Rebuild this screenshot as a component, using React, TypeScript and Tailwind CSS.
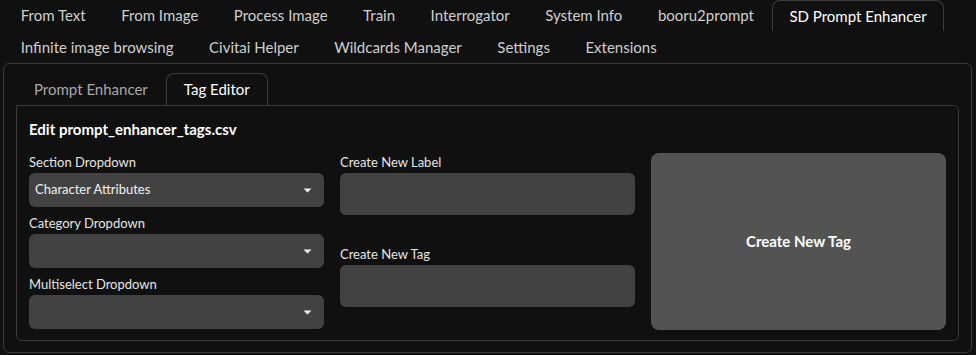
import React from "react";

const topRow1 = ["From Text", "From Image", "Process Image", "Train", "Interrogator", "System Info", "booru2prompt", "SD Prompt Enhancer"];
const topRow2 = ["Infinite image browsing", "Civitai Helper", "Wildcards Manager", "Settings", "Extensions"];

function Tab({ label, active }: { label: string; active?: boolean }) {
  return (
    <div
      className={
        "h-[31px] px-[16.75px] flex items-center text-[15px] whitespace-nowrap " +
        (active
          ? "border border-b-0 border-[#3c3c3c] rounded-t-lg text-white"
          : "border border-transparent text-[#cfcfcf]")
      }
    >
      {label}
    </div>
  );
}

function Caret() {
  return (
    <svg width="9" height="5" viewBox="0 0 9 5" className="shrink-0">
      <path d="M0.5 0.5h8L4.5 4.5z" fill="#f0f0f0" />
    </svg>
  );
}

function Dropdown({ label, value }: { label: string; value?: string }) {
  return (
    <div className="flex flex-col gap-[2px]">
      <div className="h-[18px] leading-[18px] text-[13px] text-[#e6e6e6]">{label}</div>
      <div className="h-[34px] rounded-md bg-[#424242] flex items-center justify-between pl-[6px] pr-[12px]">
        <span className="text-[13px] text-[#f2f2f2]">{value}</span>
        <Caret />
      </div>
    </div>
  );
}

function TextBox({ label }: { label: string }) {
  return (
    <div className="flex flex-col gap-[2px]">
      <div className="h-[18px] leading-[18px] text-[13px] text-[#e6e6e6]">{label}</div>
      <div className="h-[42px] rounded-md bg-[#424242]" />
    </div>
  );
}

export default function App() {
  return (
    <div
      className="w-[976px] h-[355px] bg-[#101010] px-[3px] overflow-hidden"
      style={{ fontFamily: "Lato, 'Noto Sans', sans-serif" }}
    >
      <div className="flex">
        {topRow1.map((t) => (
          <Tab key={t} label={t} active={t === "SD Prompt Enhancer"} />
        ))}
      </div>
      <div className="flex pt-[1px]">
        {topRow2.map((t) => (
          <Tab key={t} label={t} />
        ))}
      </div>

      <div className="w-[969px] border border-[#3a3a3a] rounded-md px-[12px] pt-[9px] pb-[11px]">
        <div className="flex">
          <div className="h-[32px] px-[17px] flex items-center text-[15px] text-[#a8a8a8] border border-transparent">
            Prompt Enhancer
          </div>
          <div className="h-[32px] px-[17px] flex items-center text-[15px] text-white border border-b-0 border-[#3c3c3c] rounded-t-lg">
            Tag Editor
          </div>
        </div>
        <div className="border border-[#3a3a3a] rounded-b-md rounded-tr-md px-[12px] pt-[12px] pb-[10px]">
          <div className="text-[15px] font-bold text-white leading-[22px]">Edit prompt_enhancer_tags.csv</div>
          <div className="grid grid-cols-3 gap-[16px] mt-[13px]">
            <div className="flex flex-col gap-[7px]">
              <Dropdown label="Section Dropdown" value="Character Attributes" />
              <Dropdown label="Category Dropdown" />
              <Dropdown label="Multiselect Dropdown" />
            </div>
            <div className="flex flex-col gap-[30px]">
              <TextBox label="Create New Label" />
              <TextBox label="Create New Tag" />
            </div>
            <div className="h-[177px] rounded-lg bg-[#535353] flex items-center justify-center text-[15px] font-bold text-white">
              Create New Tag
            </div>
          </div>
        </div>
      </div>
    </div>
  );
}
